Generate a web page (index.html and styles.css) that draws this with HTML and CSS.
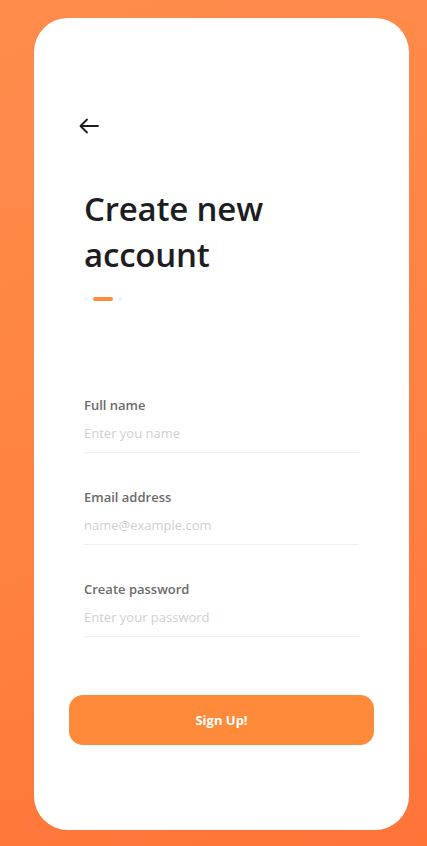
FILE: index.html
```html
<!DOCTYPE html>
<html>
<head>
<meta charset="utf-8">
<link rel="stylesheet" href="styles.css">
</head>
<body>
<div class="screen">
  <div class="card">
    <button class="back" aria-label="Back">
      <svg width="20" height="16" viewBox="0 0 20 16"><path d="M19 8H2M8 1.5L1.5 8L8 14.5" fill="none" stroke="#1d1d24" stroke-width="1.8" stroke-linecap="round" stroke-linejoin="round"/></svg>
    </button>
    <h1 class="title">Create new<br>account</h1>
    <div class="dots"><span class="dot"></span><span class="bar"></span><span class="dot"></span></div>
    <form class="form">
      <label class="field">
        <span class="label">Full name</span>
        <span class="input">Enter you name</span>
      </label>
      <label class="field">
        <span class="label">Email address</span>
        <span class="input">name@example.com</span>
      </label>
      <label class="field">
        <span class="label">Create password</span>
        <span class="input">Enter your password</span>
      </label>
    </form>
    <button class="signup">Sign Up!</button>
  </div>
</div>
</body>
</html>
```
FILE: styles.css
```css
* { box-sizing: border-box; }
html, body { margin: 0; padding: 0; }
body {
  width: 427px;
  height: 846px;
  font-family: "Open Sans", "Noto Sans", sans-serif;
  background: linear-gradient(160deg, #ff8c4b 0%, #ff8443 50%, #ff7339 100%);
}
.screen {
  padding: 18px 18px 16px 34px;
}
.card {
  width: 375px;
  height: 812px;
  background: #fff;
  border-radius: 34px;
  padding: 100px 35px 0 35px;
  display: flex;
  flex-direction: column;
}
.back {
  border: 0;
  background: none;
  padding: 0;
  margin: 0 0 0 10px;
  width: 20px;
  height: 16px;
  display: block;
}
.back svg { display: block; }
.title {
  margin: 52px 0 0 15px;
  font-size: 33px;
  line-height: 46px;
  font-weight: 600;
  color: #1d1d24;
  letter-spacing: -0.2px;
}
.dots {
  margin: 18px 0 0 15px;
  display: flex;
  align-items: center;
  gap: 5px;
  height: 6px;
}
.dot {
  width: 4px;
  height: 4px;
  border-radius: 2px;
  background: #eef3f8;
}
.bar {
  width: 20px;
  height: 4px;
  border-radius: 2px;
  background: #ff8a3a;
}
.form {
  margin: 94px 0 0 15px;
  width: 275px;
  display: flex;
  flex-direction: column;
  gap: 35px;
}
.field {
  display: flex;
  flex-direction: column;
  border-bottom: 1px solid #eeeeee;
  padding-bottom: 10px;
}
.label {
  font-size: 13px;
  line-height: 18px;
  font-weight: 600;
  color: #6b6b6b;
}
.input {
  margin-top: 10px;
  font-size: 13px;
  line-height: 18px;
  color: #cfcfcf;
}
.signup {
  margin: 58px 0 0 0;
  width: 305px;
  height: 50px;
  border: 0;
  border-radius: 14px;
  background: #ff8a3a;
  color: #fff;
  font-family: "Open Sans", "Noto Sans", sans-serif;
  font-weight: 700;
  font-size: 13px;
}
```
